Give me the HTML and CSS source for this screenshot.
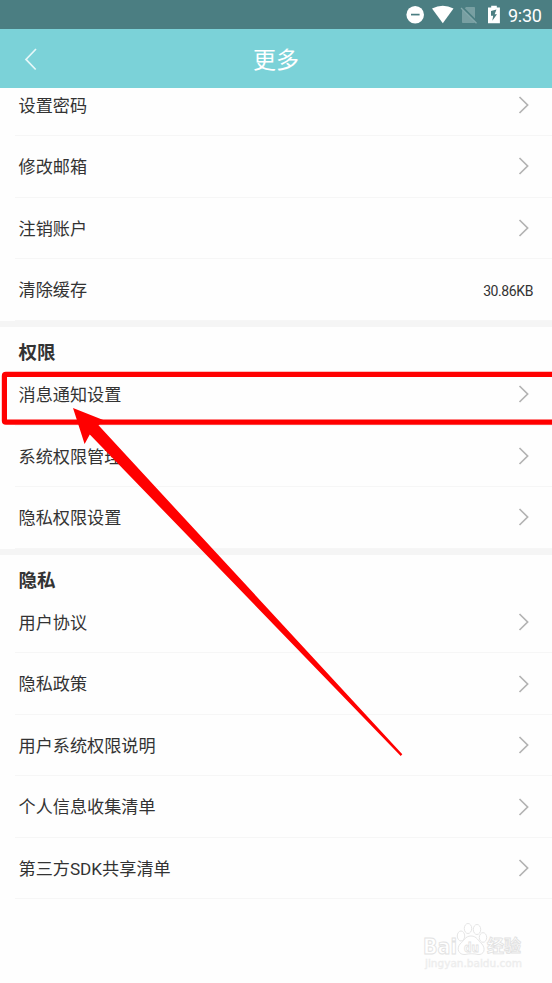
FILE: index.html
```html
<!DOCTYPE html>
<html lang="zh-CN">
<head>
<meta charset="utf-8">
<title>更多</title>
<link rel="stylesheet" href="styles.css">
</head>
<body>
<svg class="defs" width="0" height="0"><symbol id="chev" viewBox="0 0 12 18"><path d="M1.500 1L9.600 9L1.500 17" fill="none" stroke="#b3b3b3" stroke-width="1.700"/></symbol></svg>
<div class="status">
  <svg class="icons" width="110" height="29" viewBox="0 0 110 29">
    <circle cx="15.2" cy="14.8" r="8.8" fill="#fff"/>
    <path d="M11 14.6h8.6" stroke="#4b7e82" stroke-width="1.7"/>
    <path d="M32 8.6Q42.8 3 53.500 8.600L42.8 23.300Z" fill="#fff"/>
    <path d="M62.400 9.500L74.700 21.800V23H62.800Q62 23 62 22.200V12Z M66 7H74.200Q75 7 75 7.800V18.500L64.800 8.300Z" fill="#789fa2"/>
    <path d="M61 8L76.500 23.300" stroke="#84a8ab" stroke-width="1.300"/>
    <path d="M88 7.600H91.200V5.800H96.800V7.600H99.900V23.300H88Z" fill="#fff"/>
    <path d="M96.500 9.600L91 11V15.800H93.200L92.300 20.800L97 14.200H94.600Z" fill="#4b7e82"/>
  </svg>
  <span class="time">9:30</span>
</div>
<header class="bar">
  <svg class="back" width="14" height="24" viewBox="0 0 14 24"><path d="M12 2L2 12.400L11.700 22.500" fill="none" stroke="#e5f7f8" stroke-width="1.700"/></svg>
  <h1>更多</h1>
</header>
<main>
  <section class="first">
    <div class="row"><span>设置密码</span><svg class="chev"><use href="#chev"/></svg></div>
    <div class="row"><span>修改邮箱</span><svg class="chev"><use href="#chev"/></svg></div>
    <div class="row"><span>注销账户</span><svg class="chev"><use href="#chev"/></svg></div>
    <div class="row"><span>清除缓存</span><span class="size">30.86KB</span></div>
  </section>
  <section>
    <h2>权限</h2>
    <div class="row"><span>消息通知设置</span><svg class="chev"><use href="#chev"/></svg></div>
    <div class="row"><span>系统权限管理</span><svg class="chev"><use href="#chev"/></svg></div>
    <div class="row"><span>隐私权限设置</span><svg class="chev"><use href="#chev"/></svg></div>
  </section>
  <section>
    <h2>隐私</h2>
    <div class="row"><span>用户协议</span><svg class="chev"><use href="#chev"/></svg></div>
    <div class="row"><span>隐私政策</span><svg class="chev"><use href="#chev"/></svg></div>
    <div class="row"><span>用户系统权限说明</span><svg class="chev"><use href="#chev"/></svg></div>
    <div class="row"><span>个人信息收集清单</span><svg class="chev"><use href="#chev"/></svg></div>
    <div class="row"><span>第三方SDK共享清单</span><svg class="chev"><use href="#chev"/></svg></div>
  </section>
</main>
<svg class="overlay" width="552" height="983" viewBox="0 0 552 983">
  <rect x="4.400" y="374.400" width="560" height="47.800" rx="1.500" fill="none" stroke="#f00" stroke-width="5.200"/>
  <path d="M73 408L104.500 420.500L98.500 425.300L402.300 754.300L400.700 756L89.800 434.500L84.600 444Z" fill="#f00"/>
  <g class="mark">
    <text x="423" y="953.500" font-size="21" font-weight="700" textLength="34" lengthAdjust="spacingAndGlyphs">Bai</text>
    <ellipse cx="461" cy="936" rx="3.700" ry="5"/>
    <ellipse cx="468" cy="928.500" rx="3.700" ry="5"/>
    <ellipse cx="477" cy="929.500" rx="3.700" ry="5"/>
    <ellipse cx="483" cy="937.500" rx="3.700" ry="4.800"/>
    <path d="M471 936C465 936 464 941 460 944C456 949 459 955 465 954.500C469 953.500 474 953.500 478 954.500C484 955 486 949 482 944C478 941 477 936 471 936Z"/>
    <text x="464" y="952" font-size="13" font-weight="700" textLength="15" lengthAdjust="spacingAndGlyphs">du</text>
    <text x="487" y="952" font-size="17" font-weight="700" textLength="34" lengthAdjust="spacingAndGlyphs">经验</text>
    <text class="url" x="425" y="967" font-size="11" textLength="97" lengthAdjust="spacingAndGlyphs">jingyan.baidu.com</text>
  </g>
</svg>
</body>
</html>
```
FILE: styles.css
```css
* { box-sizing: border-box; }
body {
  margin: 0;
  width: 552px;
  height: 983px;
  overflow: hidden;
  position: relative;
  background: #fefefe;
  color: #333;
  font-family: Roboto, "Noto Sans CJK SC", sans-serif;
}
.defs { position: absolute; }
.status {
  position: relative;
  z-index: 2;
  height: 29px;
  background: #4b7e82;
  display: flex;
  justify-content: flex-end;
  align-items: center;
  padding-right: 10px;
  color: #fff;
}
.icons { flex: none; }
.time {
  width: 35px;
  margin-left: -3px;
  font-size: 18px;
  letter-spacing: -0.300px;
  line-height: 20px;
  font-weight: 400;
  padding: 2px 0 0 1px;
  white-space: nowrap;
}
.bar {
  position: relative;
  z-index: 2;
  height: 59.400px;
  background: #7bd2d8;
  display: grid;
  grid-template-columns: 60px 1fr 60px;
  align-items: center;
  color: #fff;
}
.back { margin-left: 24px; }
.bar h1 {
  margin: 0;
  padding-top: 4px;
  text-align: center;
  font-size: 23px;
  font-weight: 400;
  line-height: 30px;
}
main { margin-top: -13.700px; }
section + section { border-top: 6.500px solid #f5f5f5; }
.row {
  height: 61.500px;
  margin-left: 15px;
  padding: 0 19px 0 3.500px;
  border-bottom: 1.500px solid #f6f6f6;
  display: flex;
  align-items: center;
  justify-content: space-between;
  font-size: 17.150px;
  line-height: 24px;
}
.row span { padding-top: 1.500px; }
.chev { width: 12px; height: 18px; margin-right: 3px; }
.row .size { font-size: 14px; letter-spacing: -0.400px; padding-top: 3px; }
h2 {
  margin: 0;
  height: 37.300px;
  padding: 13.500px 0 0 18.500px;
  font-size: 18.500px;
  line-height: 26px;
  font-weight: 700;
}
.overlay { position: absolute; left: 0; top: 0; z-index: 3; }
.mark {
  fill: #fff;
  stroke: #e2e2e2;
  stroke-width: 0.900px;
  font-family: "DejaVu Sans", "Noto Sans CJK SC", sans-serif;
}
.mark .url { fill: #f0f0f0; stroke: #ececec; stroke-width: 0.400px; }
```
